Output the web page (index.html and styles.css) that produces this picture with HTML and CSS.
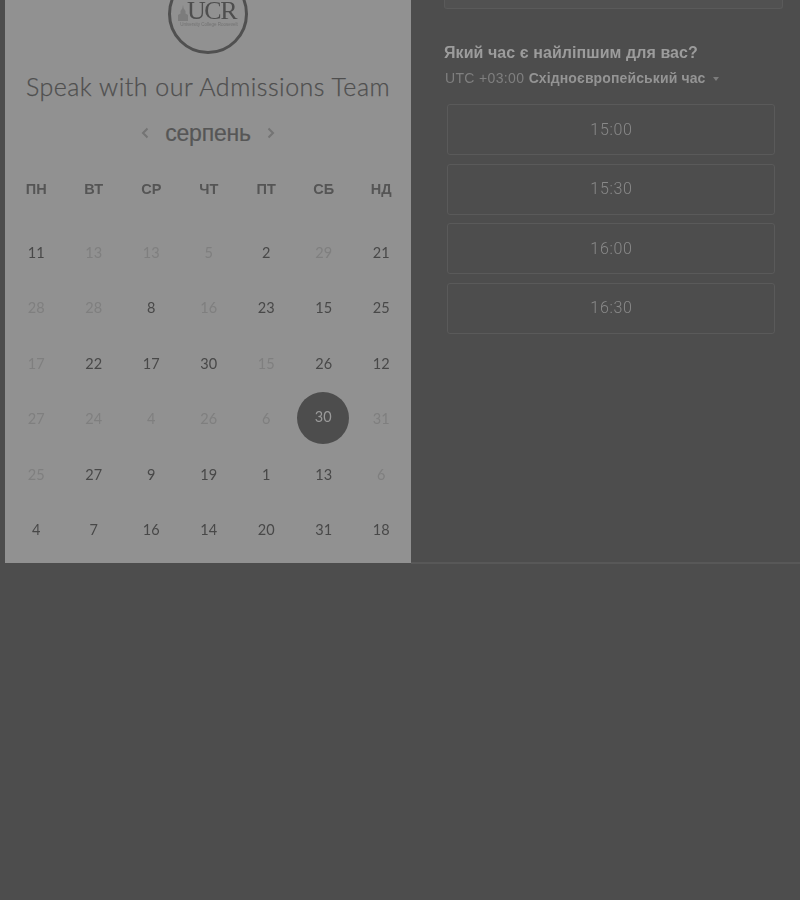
FILE: index.html
```html
<!DOCTYPE html>
<html lang="uk">
<head>
<meta charset="utf-8">
<title>Speak with our Admissions Team</title>
<link rel="stylesheet" href="styles.css">
</head>
<body>
<div class="page">
  <section class="panel">
    <div class="logo">
      <svg class="logo-building" viewBox="0 0 10 16" width="10" height="16"><path d="M5 0l.7 3.500L7.500 6v2.500L10 10v6H0v-6l2.500-1.500V6l1.800-2.500z" fill="#7c7c7c"/></svg>
      <span class="logo-text">UCR</span>
      <span class="logo-sub">University College Roosevelt</span>
    </div>
    <h1 class="title">Speak with our Admissions Team</h1>
    <div class="month">
      <svg class="chev" viewBox="0 0 8 12" width="8" height="12"><path d="M6.500 1.500L2 6l4.500 4.500" fill="none" stroke="#747474" stroke-width="2"/></svg>
      <span class="month-name">серпень</span>
      <svg class="chev" viewBox="0 0 8 12" width="8" height="12"><path d="M1.500 1.500L6 6l-4.500 4.500" fill="none" stroke="#747474" stroke-width="2"/></svg>
    </div>
    <div class="weekdays">
      <span>ПН</span><span>ВТ</span><span>СР</span><span>ЧТ</span><span>ПТ</span><span>СБ</span><span>НД</span>
    </div>
    <div class="days">
      <span>11</span><span class="off">13</span><span class="off">13</span><span class="off">5</span><span>2</span><span class="off">29</span><span>21</span>
      <span class="off">28</span><span class="off">28</span><span>8</span><span class="off">16</span><span>23</span><span>15</span><span>25</span>
      <span class="off">17</span><span>22</span><span>17</span><span>30</span><span class="off">15</span><span>26</span><span>12</span>
      <span class="off">27</span><span class="off">24</span><span class="off">4</span><span class="off">26</span><span class="off">6</span><span class="sel"><b>30</b></span><span class="off">31</span>
      <span class="off">25</span><span>27</span><span>9</span><span>19</span><span>1</span><span>13</span><span class="off">6</span>
      <span>4</span><span>7</span><span>16</span><span>14</span><span>20</span><span>31</span><span>18</span>
    </div>
  </section>
  <section class="side">
    <div class="top-box"></div>
    <h2 class="question">Який час є найліпшим для вас?</h2>
    <div class="tz">UTC +03:00 <strong>Східноєвропейський час</strong><i class="caret"></i></div>
    <div class="slots">
      <div class="slot">15:00</div>
      <div class="slot">15:30</div>
      <div class="slot">16:00</div>
      <div class="slot">16:30</div>
    </div>
  </section>
</div>
</body>
</html>
```
FILE: styles.css
```css
html, body { margin: 0; padding: 0; background: #4d4d4d; height: 900px; overflow: hidden; }
body { font-family: "Liberation Sans", Arial, sans-serif; }
.page { display: flex; align-items: flex-start; padding-left: 5px; height: 564px; filter: blur(0.4px); }
.panel { width: 406px; height: 563px; background: #919191; flex: none; }
.logo { box-sizing: border-box; width: 80px; height: 80px; margin: -26px auto 0; border: 3px solid #505050; border-radius: 50%; display: flex; flex-direction: column; align-items: center; position: relative; padding-top: 25px; }
.logo-text { font-family: "Liberation Serif", serif; font-size: 26px; line-height: 18px; letter-spacing: -1.5px; color: #4e4e4e; padding-left: 7px; }
.logo-sub { font-size: 4.500px; line-height: 7px; margin-top: 1px; color: #727272; white-space: nowrap; padding-left: 2px; }
.logo-building { position: absolute; left: 7px; top: 28px; }
.title { margin: 15px 0 0; font-family: Lato, sans-serif; font-weight: 300; font-size: 25px; line-height: 34px; letter-spacing: .5px; color: #4e4e4e; -webkit-text-stroke: .25px #505050; text-align: center; white-space: nowrap; }
.month { display: flex; justify-content: center; align-items: center; gap: 16px; height: 30px; margin-top: 15px; }
.month-name { font-size: 23px; letter-spacing: -.2px; color: #565656; line-height: 30px; -webkit-text-stroke: .2px #565656; }
.chev { flex: none; margin-top: -1px; }
.weekdays, .days { display: grid; grid-template-columns: repeat(7, 57.5px); margin-left: 2.500px; }
.weekdays { margin-top: 31px; font-size: 14.500px; font-weight: 700; color: #555; text-align: center; line-height: 20px; }
.days { margin-top: 25.500px; grid-auto-rows: 55.5px; font-family: Lato, sans-serif; font-size: 14.500px; color: #484848; }
.days span { display: flex; align-items: center; justify-content: center; }
.days .off { color: #7f7f7f; }
.days .sel b { box-sizing: border-box; font-weight: 400; color: #9a9a9a; width: 52px; height: 52px; border-radius: 50%; background: #4d4d4d; display: flex; align-items: center; justify-content: center; flex: none; margin: -2px 1px 0 0; padding-bottom: 2px; }
.side { flex: none; width: 389px; height: 564px; box-sizing: border-box; padding-left: 33px; border-bottom: 2px solid #585858; }
.top-box { box-sizing: border-box; width: 339px; height: 9px; background: #515151; border: 1px solid #5a5a5a; border-top: 0; border-radius: 0 0 3px 3px; }
.question { margin: 34px 0 0; font-size: 16px; line-height: 20px; font-weight: 700; color: #9c9c9c; letter-spacing: .07px; }
.tz { margin-top: 6px; padding-left: 1px; font-size: 14px; line-height: 18px; letter-spacing: .35px; color: #7f7f7f; white-space: nowrap; }
.tz strong { color: #949494; letter-spacing: .12px; }
.caret { display: inline-block; margin-left: 8px; border: 3.500px solid transparent; border-top: 4px solid #7c7c7c; border-bottom: 0; vertical-align: 2px; }
.slots { margin: 17px 0 0 3px; width: 328px; display: flex; flex-direction: column; gap: 8.500px; }
.slot { box-sizing: border-box; height: 51px; border: 1px solid #5a5a5a; border-radius: 3px; display: flex; align-items: center; justify-content: center; font-family: Roboto, sans-serif; font-weight: 300; font-size: 16px; letter-spacing: .7px; color: #898989; padding: 0 0 1px 1px; }
```
